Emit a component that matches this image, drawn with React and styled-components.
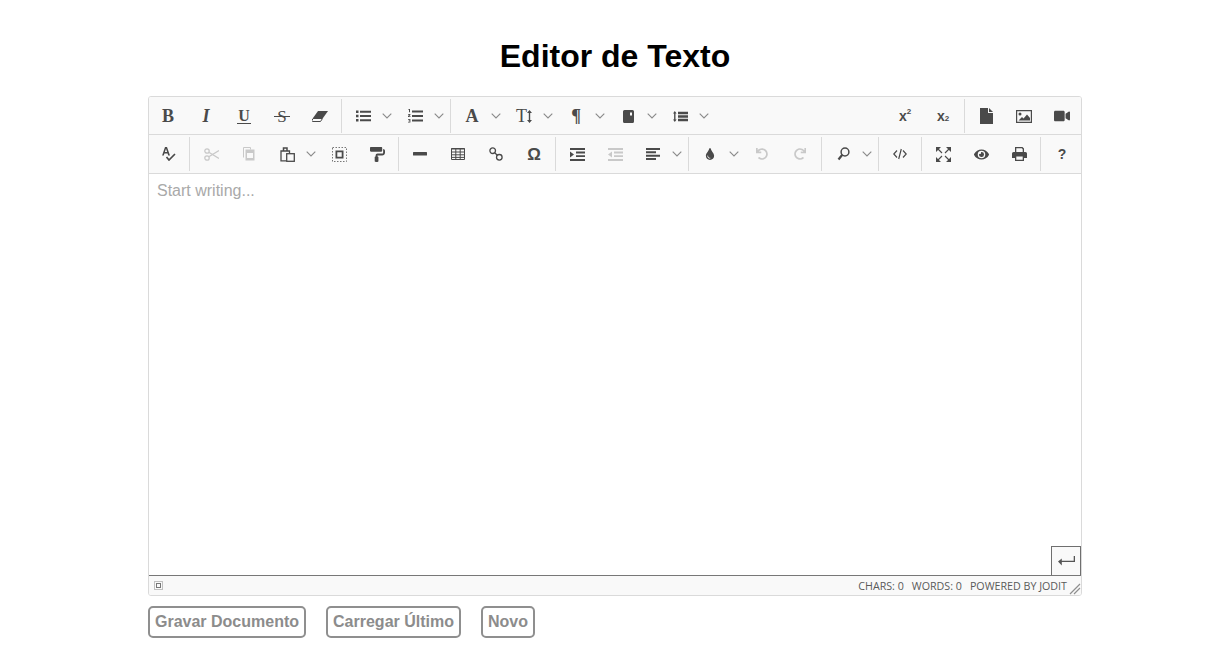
import React from "react";
import styled, { createGlobalStyle } from "styled-components";
import { FaPaintRoller, FaTint, FaEye, FaVideo, FaUndo, FaRedo } from "react-icons/fa";

const Global = createGlobalStyle`
  html, body { margin: 0; padding: 0; background: #fff; }
  body { font-family: "Liberation Sans", Arial, sans-serif; }
`;

const Page = styled.main`
  width: 934px;
  margin-left: 148px;
  padding-top: 38px;
`;
const Title = styled.h1`
  margin: 0 0 21px;
  font-size: 32px;
  line-height: 37px;
  font-weight: 700;
  text-align: center;
  color: #000;
`;
const Editor = styled.section`
  height: 500px;
  box-sizing: border-box;
  border: 1px solid #dadada;
  border-radius: 3px;
  display: flex;
  flex-direction: column;
  overflow: hidden;
`;
const Row = styled.div`
  display: flex;
  height: ${(p) => p.$h}px;
  flex: none;
  box-sizing: border-box;
  background: #f9f9f9;
  border-bottom: 1px solid #dadada;
  padding-top: 1px;
`;
const Spacer = styled.div`
  flex: 1;
`;
const Btn = styled.div`
  width: 38px;
  height: 36px;
  flex: none;
  display: flex;
  align-items: center;
  justify-content: center;
  color: ${(p) => (p.$off ? "#c9c9c9" : "#4a4a4a")};
`;
const Chev = styled.div`
  width: 14px;
  height: 36px;
  flex: none;
  display: flex;
  align-items: center;
  color: #8a8a8a;
`;
const Sep = styled.div`
  width: 1px;
  height: 34px;
  margin: 1px 2px 0;
  flex: none;
  background: #dadada;
`;
const Glyph = styled.span`
  font-family: ${(p) => (p.$sans ? '"Liberation Sans", sans-serif' : '"Liberation Serif", serif')};
  font-size: ${(p) => p.$size || 18}px;
  font-weight: ${(p) => (p.$thin ? 400 : 700)};
  font-style: ${(p) => (p.$italic ? "italic" : "normal")};
  line-height: 1;
  display: inline-flex;
  align-items: center;
`;
const Under = styled(Glyph)`
  padding: 0 1px 1px;
  border-bottom: 1.5px solid currentColor;
  line-height: 13px;
`;
const Strike = styled(Glyph)`
  position: relative;
  &::after {
    content: "";
    position: absolute;
    left: -3px;
    right: -3px;
    top: 50%;
    height: 1px;
    background: currentColor;
  }
`;
const Sup = styled.span`
  font-size: 8px;
  position: relative;
  top: ${(p) => p.$top}px;
`;
const Area = styled.div`
  position: relative;
  flex: 1;
  padding: 8px;
  font-size: 16px;
  line-height: 18px;
  color: #a9a9a9;
  border-bottom: 1px solid #777;
`;
const Enter = styled.div`
  position: absolute;
  right: 0;
  bottom: 0;
  width: 28px;
  height: 28px;
  border: 1px solid #6f6f6f;
  border-bottom: none;
  background: #f9f9f9;
  display: flex;
  align-items: center;
  justify-content: center;
  color: #555;
`;
const Status = styled.footer`
  height: 19px;
  flex: none;
  display: flex;
  align-items: center;
  background: #f9f9f9;
  padding: 0 14px 0 5px;
  position: relative;
  font-family: "Open Sans", sans-serif;
  font-size: 10.7px;
  color: #5a5a5a;
  text-transform: uppercase;
  gap: 8px;
`;
const Grip = styled.svg`
  position: absolute;
  right: 0;
  bottom: 0;
`;
const Actions = styled.div`
  display: flex;
  gap: 20px;
  margin-top: 10px;
`;
const Action = styled.button`
  height: 32px;
  padding: 0 5px;
  background: #fff;
  border: 2px solid #8f8f8f;
  border-radius: 5px;
  font-family: "Liberation Sans", Arial, sans-serif;
  font-size: 16px;
  font-weight: 700;
  color: #8c8c8c;
`;

const I = ({ children, w = 14, h = 14, vb }) => (
  <svg width={w} height={h} viewBox={vb || `0 0 ${w} ${h}`} fill="currentColor">{children}</svg>
);

const ChevronIcon = () => (
  <svg width="10" height="6" viewBox="0 0 10 6" fill="none" stroke="currentColor" strokeWidth="1.1"><path d="M.7.7 5 5 9.3.7" /></svg>
);

const icons = {
  eraser: <I w={16} h={11}><path d="M6 0h10L11 7H1z" /><path d="M1 7.500h9.500L8.500 10.500H0.500L0 9.500z" fill="none" stroke="currentColor" /></I>,
  ul: <I w={15} h={12}><path d="M0 .5h2.5v2.5H0zM0 4.800h2.500v2.500H0zM0 9h2.500v2.500H0zM4 .8h11v2H4zM4 5h11v2H4zM4 9.200h11v2H4z" /></I>,
  ol: <I w={15} h={14}><path d="M.5 0h1.500v3.200H1V1H.5zM0 5h2.400v1L1 7.300h1.500V8H0V7l1.400-1.200H0zM0 10h2.400v3.500H0v-.7h1.500v-.7H.7v-.6h.8v-.8H0zM4 1.500h11v2H4zM4 6h11v2H4zM4 10.500h11v2H4z" /></I>,
  book: <I w={11} h={13}><path fillRule="evenodd" d="M1.500 0h8A1.500 1.500 0 0 1 11 1.500v10a1.500 1.500 0 0 1-1.500 1.500h-8A1.500 1.500 0 0 1 0 11.500v-10A1.500 1.500 0 0 1 1.500 0zM7 2.500v3h2v-3z" /></I>,
  lh: <I w={15} h={11}><path d="M0 2.500 1.800 0l1.800 2.500H2.500v6h1.100L1.800 11 0 8.500h1.100v-6zM5 .8h10v2.400H5zM5 4.300h10v2.400H5zM5 7.800h10v2.400H5z" /></I>,
  file: <I w={13} h={16}><path d="M0 0h8v5h5v11H0zM9 0l4 4H9z" /></I>,
  image: <I w={16} h={13}><path fillRule="evenodd" d="M0 0h16v13H0zM1.200 1.200v10.600h13.600V1.200z" /><circle cx="4" cy="4" r="1.500" /><path d="M2.500 10.500 6 7l1.500 1.500L11 4.500l3 3.500v2.500z" /></I>,
  arrowV: <svg width="5" height="13" viewBox="0 0 5 13" fill="currentColor"><path d="M2.500 0 5 3H3.200v7H5l-2.500 3L0 10h1.800V3H0z" /></svg>,
  spell: <I w={15} h={14}><path d="M4 0h2l3 8.500H7.200l-.6-2H3.400l-.6 2H1.100zM3.900 5h2.200L5 1.800z" /><path d="m5.500 10 2.500 3 6-6" fill="none" stroke="currentColor" strokeWidth="1.700" /></I>,
  cut: <I w={15} h={13}><g fill="none" stroke="currentColor" strokeWidth="1.300"><circle cx="3" cy="3" r="2.200" /><circle cx="3" cy="10" r="2.200" /><path d="M4.800 4.200 15 10.500M4.800 8.800 15 2.500" /></g></I>,
  copy: <I w={12} h={14}><path fill="none" stroke="currentColor" d="M.5 10.500V.5h7v2" /><path fillRule="evenodd" d="M2.500 2.500h9v11h-9zM4 6v5h6V6z" /></I>,
  paste: <I w={15} h={15}><path fill="none" stroke="currentColor" strokeWidth="1.300" d="M6 13.800H1V4h8.500v2.500" /><path fill="none" stroke="currentColor" strokeWidth="1.500" d="M3.500 4V1h3.500v3" /><rect x="6.700" y="6.700" width="7.600" height="7.600" fill="none" stroke="currentColor" strokeWidth="1.300" /></I>,
  selectall: <I w={15} h={15}><rect x=".5" y=".5" width="14" height="14" fill="none" stroke="#777" strokeDasharray="1.500 1.500" /><path fillRule="evenodd" d="M3.500 3.500h8v8h-8zM5.300 5.300v4.400h4.400V5.300z" /></I>,
  hr: <I w={14} h={4}><rect width="14" height="3.500" rx=".5" /></I>,
  table: <I w={14} h={12}><path d="M.5.500h13v11H.5zM0 1h14M0 4h14M0 6.800h14M0 9.400h14M4.800 1v10M9.200 1v10" fill="none" stroke="currentColor" /></I>,
  link: <I w={14} h={14}><g fill="none" stroke="currentColor" strokeWidth="1.300"><circle cx="3.700" cy="3.700" r="2.800" /><circle cx="10.300" cy="10.300" r="2.800" /><path d="m5.500 5.500 3 3" /></g></I>,
  indent: <I w={15} h={13}><path d="M0 0h15v2H0zM6 3.600h9v1.800H6zM6 7.200h9V9H6zM0 11h15v2H0zM0 3.500l4 3-4 3z" /></I>,
  outdent: <I w={15} h={13}><path d="M0 0h15v2H0zM6 3.600h9v1.800H6zM6 7.200h9V9H6zM0 11h15v2H0zM4 3.500l-4 3 4 3z" /></I>,
  align: <I w={14} h={12}><path d="M0 0h14v2H0zM0 3.300h10v2H0zM0 6.700h14v2H0zM0 10h10v2H0z" /></I>,
  find: <I w={13} h={14}><circle cx="8" cy="5" r="3.900" fill="none" stroke="currentColor" strokeWidth="1.500" /><path d="m5.300 7.800-3.800 4.700" fill="none" stroke="currentColor" strokeWidth="2.200" /></I>,
  source: <I w={14} h={12}><path d="M4 2.500.8 6 4 9.500M10 2.500 13.200 6 10 9.500M8.300 1 5.700 11" fill="none" stroke="currentColor" strokeWidth="1.200" /></I>,
  full: <I w={15} h={15}><path d="M0 0h5L0 5zM15 0v5l-5-5zM0 15v-5l5 5zM15 15h-5l5-5z" /><path d="m2 2 4 4M13 2 9 6M2 13l4-4M13 13 9 9" fill="none" stroke="currentColor" strokeWidth="1.100" /></I>,
  print: <I w={15} h={14}><path fillRule="evenodd" d="M3 0h7.500L12 1.500V5h1.500A1.500 1.500 0 0 1 15 6.500V11h-3v3H3v-3H0V6.500A1.500 1.500 0 0 1 1.500 5H3zM4.300 1.300V5h6.400V2.200L9.800 1.300zM4.300 9.500v3.200h6.400V9.500z" /></I>,
  enter: <I w={17} h={10}><path d="M15.700 0H17v6H3.800v3.500L0 5.400 3.800 2.500v2.200h11.900z" /></I>,
  statusSel: <I w={9} h={9}><rect x=".5" y=".5" width="8" height="8" fill="none" stroke="#888" strokeDasharray="1 1" /><path fill="#777" fillRule="evenodd" d="M2 2h5v5H2zM3 3v3h3V3z" /></I>,
};

const row1 = [
  { g: <Glyph>B</Glyph> },
  { g: <Glyph $italic>I</Glyph> },
  { g: <Under $size={16}>U</Under> },
  { g: <Strike $thin $size={17}>S</Strike> },
  { g: icons.eraser },
  "sep",
  { g: icons.ul, c: 1 },
  { g: icons.ol, c: 1 },
  "sep",
  { g: <Glyph $size={18}>A</Glyph>, c: 1 },
  { g: <Glyph $thin $size={18}>T{icons.arrowV}</Glyph>, c: 1 },
  { g: <Glyph $size={18}>¶</Glyph>, c: 1 },
  { g: icons.book, c: 1 },
  { g: icons.lh, c: 1 },
  "space",
  { g: <Glyph $sans $size={14}>x<Sup $top={-4}>2</Sup></Glyph> },
  { g: <Glyph $sans $size={14}>x<Sup $top={3}>2</Sup></Glyph> },
  "sep",
  { g: icons.file },
  { g: icons.image },
  { g: <FaVideo size={16} /> },
];

const row2 = [
  { g: icons.spell },
  "sep",
  { g: icons.cut, off: 1 },
  { g: icons.copy, off: 1 },
  { g: icons.paste, c: 1 },
  { g: icons.selectall },
  { g: <FaPaintRoller size={15} /> },
  "sep",
  { g: icons.hr },
  { g: icons.table },
  { g: icons.link },
  { g: <Glyph $sans $size={17}>Ω</Glyph> },
  "sep",
  { g: icons.indent },
  { g: icons.outdent, off: 1 },
  { g: icons.align, c: 1 },
  "sep",
  { g: <FaTint size={12} />, c: 1 },
  { g: <FaUndo size={12} />, off: 1 },
  { g: <FaRedo size={12} />, off: 1 },
  "sep",
  { g: icons.find, c: 1 },
  "sep",
  { g: icons.source },
  "sep",
  { g: icons.full },
  { g: <FaEye size={15} /> },
  { g: icons.print },
  "sep",
  { g: <Glyph $sans $size={14}>?</Glyph> },
];

const Toolbar = ({ items, h }) => (
  <Row $h={h}>
    {items.map((it, i) => {
      if (it === "sep") return <Sep key={i} />;
      if (it === "space") return <Spacer key={i} />;
      return (
        <React.Fragment key={i}>
          <Btn $off={it.off}>{it.g}</Btn>
          {it.c ? <Chev><ChevronIcon /></Chev> : null}
        </React.Fragment>
      );
    })}
  </Row>
);

export default function App() {
  return (
    <Page>
      <Global />
      <Title>Editor de Texto</Title>
      <Editor>
        <Toolbar items={row1} h={38} />
        <Toolbar items={row2} h={39} />
        <Area>
          Start writing...
          <Enter>{icons.enter}</Enter>
        </Area>
        <Status>
          {icons.statusSel}
          <Spacer />
          <span>Chars: 0</span>
          <span>Words: 0</span>
          <span>Powered by Jodit</span>
          <Grip width="12" height="12" viewBox="0 0 12 12" fill="none" stroke="#8f8f8f" strokeWidth="1.200">
            <path d="M1 11 11 1M5 11l6-6" />
          </Grip>
        </Status>
      </Editor>
      <Actions>
        <Action>Gravar Documento</Action>
        <Action>Carregar Último</Action>
        <Action>Novo</Action>
      </Actions>
    </Page>
  );
}
